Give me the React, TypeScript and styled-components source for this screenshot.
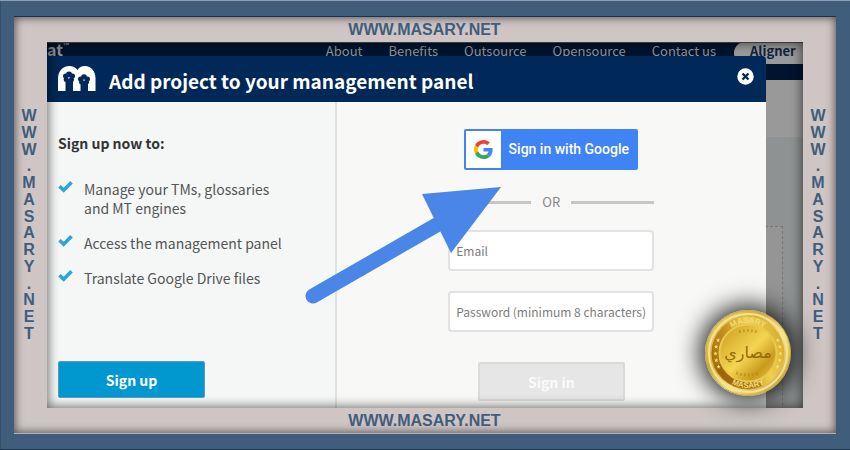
import React from "react";
import styled, { createGlobalStyle } from "styled-components";

const site = "WWW.MASARY.NET";
const blue = "#405d7b";
const navy = "#002858";
const sans = '"Noto Sans CJK SC", "Noto Sans", sans-serif';

const GlobalStyle = createGlobalStyle`
  * { box-sizing: border-box; }
  body { margin: 0; background: ${blue}; font-family: ${sans}; }
  button, input { font-family: inherit; }
`;

const Frame = styled.div`
  display: flex;
  min-height: 100vh;
  padding: 17px 14px;
  background: ${blue};
  box-shadow: inset 0 1px #8b9eb2, inset 0 -1px #1f3650, inset 1px 0 #34506c;
`;

const Mat = styled.div`
  flex: 1;
  display: grid;
  grid-template-columns: 33px 1fr 33px;
  grid-template-rows: 25px 1fr 25px;
  background: #cfc5c5;
  box-shadow: inset 0 0 9px 1px rgba(50, 40, 40, 0.75), 0 -1px #1c3147, 0 1px #aab6c2;
`;

const Banner = styled.div`
  grid-column: 1 / -1;
  display: flex;
  align-items: center;
  justify-content: center;
  padding-right: 1px;
  color: ${blue};
  font: bold 16px/18px "Liberation Sans", Arial, sans-serif;
`;

const SideBanner = styled.div`
  display: flex;
  flex-direction: column;
  justify-content: space-between;
  align-items: center;
  padding: 66px 3px 66px 0;
  color: ${blue};
  font: bold 16px/16px "Liberation Sans", Arial, sans-serif;
`;

const Screen = styled.div`
  position: relative;
  display: flex;
  flex-direction: column;
  overflow: hidden;
  background: #8f9292;
  &::after {
    content: "";
    position: absolute;
    inset: 0;
    pointer-events: none;
    box-shadow: inset 0 0 11px 1px rgba(0, 0, 0, 0.6), inset 0 1px #555;
  }
`;

const Backdrop = styled.div`
  position: absolute;
  inset: 0;
`;

const Nav = styled.nav`
  display: flex;
  justify-content: flex-end;
  height: 38px;
  background: #00142f;
`;

const Brand = styled.span`
  display: flex;
  margin-right: auto;
  color: #8d9196;
  font-size: 16px;
  font-weight: bold;
  line-height: 14px;
  sup { font-size: 8px; line-height: 8px; }
`;

const NavLink = styled.a`
  margin-right: 26px;
  color: #8f9297;
  font-size: 13px;
  line-height: 18px;
  text-decoration: none;
`;

const Aligner = styled.a`
  width: 69px;
  height: 22px;
  padding-left: 16px;
  margin-left: -8px;
  border-radius: 12px 0 0 12px;
  background: #999;
  color: #0d2340;
  font-size: 13px;
  font-weight: bold;
  line-height: 18px;
  text-decoration: none;
`;

const Hero = styled.div`
  height: 57px;
  background: #999;
`;

const DropZone = styled.div`
  height: 220px;
  margin: 89px 20px 0;
  border: 1px dashed #777;
  background: #959595;
`;

const Modal = styled.section`
  position: relative;
  flex: 1;
  display: flex;
  flex-direction: column;
  margin: 14px 37px 0 0;
`;

const Header = styled.header`
  display: flex;
  align-items: center;
  gap: 13px;
  min-height: 46px;
  padding: 0 12px 0 11px;
  border-radius: 0 4px 0 0;
  background: ${navy};
  color: #fff;
`;

const Title = styled.h1`
  flex: 1;
  margin: 0;
  font-size: 19px;
  line-height: 32px;
  padding-top: 4px;
  white-space: nowrap;
`;

const Close = styled.button`
  width: 17px;
  height: 17px;
  margin-bottom: 6px;
  padding: 0;
  border: 0;
  background: none;
  svg { display: block; }
`;

const Body = styled.div`
  position: relative;
  flex: 1;
  display: flex;
  background: #f8f8f7;
`;

const Benefits = styled.div`
  flex: 0 0 40%;
  display: flex;
  flex-direction: column;
  align-items: flex-start;
  padding: 31px 11px 10px;
  background: #f5f7f7;
`;

const Lead = styled.h2`
  margin: 0 0 27px;
  color: #333;
  font-size: 14px;
  line-height: 20px;
`;

const List = styled.ul`
  display: grid;
  gap: 16px;
  margin: 0;
  padding: 0;
  list-style: none;
`;

const Item = styled.li`
  display: flex;
  gap: 11px;
  color: #555;
  font-size: 14px;
  line-height: 19px;
  white-space: pre-line;
  svg { flex: none; }
`;

const SignUp = styled.button`
  width: 147px;
  height: 37px;
  margin-top: auto;
  padding: 0;
  border: 1px solid #5b9db8;
  border-radius: 2px;
  background: #0098cf;
  color: #fff;
  font-size: 14px;
  font-weight: bold;
`;

const Account = styled.div`
  flex: 1;
  display: flex;
  justify-content: center;
  padding: 27px 0 7px;
  border-left: 2px solid #e0e2e2;
`;

const Form = styled.form`
  display: flex;
  flex-direction: column;
  align-items: center;
  width: 206px;
`;

const Google = styled.button`
  display: flex;
  width: 174px;
  height: 41px;
  padding: 0;
  border: 2px solid #4083f5;
  border-radius: 2px;
  background: #4083f5;
  color: #fff;
  font: 500 14px/37px Roboto, sans-serif;
`;

const GoogleMark = styled.span`
  display: grid;
  place-items: center;
  width: 35px;
  height: 37px;
  background: #fff;
`;

const GoogleText = styled.span`
  flex: 1;
  white-space: nowrap;
`;

const Divider = styled.div`
  display: flex;
  align-items: center;
  gap: 11px;
  width: 100%;
  margin: 22px 0 18px;
  color: #888;
  font-size: 13px;
  line-height: 20px;
  &::before, &::after {
    content: "";
    flex: 1;
    height: 3px;
    background: #c6c6c6;
  }
`;

const Field = styled.input`
  width: 100%;
  height: 41px;
  margin-bottom: 20px;
  padding: 0 6px;
  border: 2px solid #e2e2e2;
  border-radius: 4px;
  background: #fff;
  color: #555;
  font-size: 12px;
  &::placeholder { color: #7c7c7c; opacity: 1; }
`;

const SignIn = styled.button`
  width: 147px;
  height: 39px;
  margin-top: 10px;
  padding: 0;
  border: 2px solid #dadada;
  border-radius: 2px;
  background: #e6e6e6;
  color: #fafafa;
  font-size: 14px;
  font-weight: bold;
`;

const Pointer = styled.svg`
  position: absolute;
  left: 257px;
  top: 85px;
`;

const CoinBadge = styled.div`
  position: absolute;
  right: 12px;
  bottom: 12px;
  z-index: 1;
  width: 86px;
  height: 86px;
  border-radius: 50%;
  box-shadow: 0 0 24px 5px rgba(0, 0, 0, 0.85);
  svg { display: block; }
`;

const MatCenter = styled.div`
  position: relative;
  display: grid;
`;

const Check = () => (
  <svg width="15" height="15" viewBox="0 0 15 15" aria-hidden="true">
    <path d="M1.5 6.3l4.2 4L13.5 2.3" fill="none" stroke="#2ba6dc" strokeWidth="3.6" />
  </svg>
);

const Logo = () => (
  <svg width="38" height="26" viewBox="0 0 38 26" aria-hidden="true">
    <path d="M0 25V13C0 5 5 0 11 0c4 0 6.500 1.500 8.500 4C21 1.500 23.500 0 27 0c6 0 10.500 5 10.500 12v13z" fill="#fff" />
    <g fill={navy}>
      <circle cx="11" cy="8.500" r="3" />
      <circle cx="7.500" cy="10" r="2.500" />
      <circle cx="14.500" cy="10" r="2.500" />
      <circle cx="8.200" cy="13.500" r="2.500" />
      <circle cx="13.500" cy="13.500" r="2.500" />
      <path d="M7.500 13h7.500v13H7.500z" />
      <circle cx="26" cy="11" r="2.800" />
      <circle cx="22.500" cy="13" r="2.500" />
      <circle cx="29.500" cy="13" r="2.500" />
      <circle cx="23.500" cy="16" r="2.500" />
      <circle cx="28.500" cy="16" r="2.500" />
      <path d="M22.500 15h7.500v11h-7.500z" />
    </g>
  </svg>
);

const GoogleG = () => (
  <svg width="19" height="19" viewBox="0 0 48 48" aria-hidden="true">
    <path fill="#EA4335" d="M24 9.5c3.54 0 6.71 1.22 9.21 3.6l6.85-6.85C35.9 2.38 30.47 0 24 0 14.62 0 6.51 5.38 2.56 13.22l7.98 6.19C12.43 13.72 17.74 9.5 24 9.5z" />
    <path fill="#4285F4" d="M46.98 24.55c0-1.57-.15-3.09-.38-4.55H24v9.02h12.94c-.58 2.96-2.26 5.48-4.78 7.18l7.73 6c4.51-4.18 7.09-10.36 7.09-17.65z" />
    <path fill="#FBBC05" d="M10.53 28.59A14.5 14.5 0 0 1 10.53 19.41l-7.98-6.19a24 24 0 0 0 0 21.56l7.98-6.19z" />
    <path fill="#34A853" d="M24 48c6.48 0 11.93-2.13 15.89-5.81l-7.73-6c-2.15 1.45-4.92 2.3-8.16 2.3-6.26 0-11.57-4.22-13.47-9.91l-7.98 6.19C6.51 42.62 14.62 48 24 48z" />
  </svg>
);

const stars = [155, 167, 179, 191, 203, 337, 349, 1, 13, 25];

const Coin = () => (
  <CoinBadge>
    <svg width="86" height="86" viewBox="0 0 86 86" role="img" aria-label="Masary coin">
      <defs>
        <linearGradient id="rim" x1="0" y1="0" x2="1" y2="1">
          <stop offset="0" stopColor="#f3df78" />
          <stop offset=".35" stopColor="#d4ad37" />
          <stop offset=".6" stopColor="#f6e78b" />
          <stop offset="1" stopColor="#b98b22" />
        </linearGradient>
        <linearGradient id="ring" x1="0" y1=".7" x2="1" y2=".3">
          <stop offset="0" stopColor="#a26a0c" />
          <stop offset=".35" stopColor="#c79420" />
          <stop offset=".65" stopColor="#f0cf50" />
          <stop offset="1" stopColor="#d6aa2c" />
        </linearGradient>
        <linearGradient id="face" x1="0" y1="0" x2="1" y2="1">
          <stop offset="0" stopColor="#c99a1d" />
          <stop offset=".5" stopColor="#f4d552" />
          <stop offset=".75" stopColor="#c99b1c" />
          <stop offset="1" stopColor="#ecd05a" />
        </linearGradient>
        <path id="upper" d="M13 43a30 30 0 0 1 60 0" />
        <path id="lower" d="M8 43a35 35 0 0 0 70 0" />
      </defs>
      <circle cx="43" cy="43" r="42.5" fill="url(#rim)" stroke="#c5a33d" />
      <circle cx="43" cy="43" r="39" fill="none" stroke="#f4e492" strokeWidth="2" />
      <circle cx="43" cy="43" r="36.5" fill="url(#ring)" />
      <path d="M10 56a36 36 0 0 0 47 20l-3-7a28 28 0 0 1-36-16z" fill="#8f5508" opacity=".55" />
      <circle cx="43" cy="43" r="28.5" fill="url(#face)" stroke="#e9c94e" strokeWidth="2" />
      <g fill="#f5dc74" fontFamily="Liberation Sans" fontSize="8" fontWeight="bold" textAnchor="middle">
        <text><textPath href="#upper" startOffset="50%">MASARY</textPath></text>
        <text><textPath href="#lower" startOffset="50%">MASARY</textPath></text>
      </g>
      {stars.map((a) => (
        <path
          key={a}
          d="M0-2.2l.6 1.5h1.6L.9.3l.5 1.6L0 1l-1.4.9.5-1.6-1.3-1h1.6z"
          fill="#f7df78"
          transform={`translate(${43 + 32.5 * Math.cos((a * Math.PI) / 180)} ${43 + 32.5 * Math.sin((a * Math.PI) / 180)})`}
        />
      ))}
      <path d="M34 22q9-3 18 0M31 63q12 4 24 0" fill="none" stroke="#b5861b" strokeWidth="3" strokeDasharray="2 2" opacity=".6" />
      <text x="43" y="48" textAnchor="middle" fontFamily="DejaVu Sans" fontSize="16" fill="#98690a" direction="rtl">مصاري</text>
    </svg>
  </CoinBadge>
);

const letters = site.split("");
const links = ["About", "Benefits", "Outsource", "Opensource", "Contact us"];
const benefits = [
  "Manage your TMs, glossaries\nand MT engines",
  "Access the management panel",
  "Translate Google Drive files",
];

export default function App() {
  return (
    <>
      <GlobalStyle />
      <Frame>
        <Mat>
          <Banner>{site}</Banner>
          <SideBanner>{letters.map((c, i) => <span key={i}>{c}</span>)}</SideBanner>
          <MatCenter>
            <Screen>
              <Backdrop>
                <Nav>
                  <Brand>at<sup>™</sup></Brand>
                  {links.map((l) => <NavLink key={l} href="#">{l}</NavLink>)}
                  <Aligner href="#">Aligner</Aligner>
                </Nav>
                <Hero />
                <DropZone />
              </Backdrop>
              <Modal role="dialog" aria-labelledby="title">
                <Header>
                  <Logo />
                  <Title id="title">Add project to your management panel</Title>
                  <Close aria-label="Close">
                    <svg width="17" height="17" viewBox="0 0 17 17">
                      <circle cx="8.5" cy="8.5" r="8.2" fill="#fff" />
                      <path d="M5.5 5.5l6 6m0-6l-6 6" stroke={navy} strokeWidth="2.4" />
                    </svg>
                  </Close>
                </Header>
                <Body>
                  <Benefits>
                    <Lead>Sign up now to:</Lead>
                    <List>
                      {benefits.map((b) => <Item key={b}><Check /><span>{b}</span></Item>)}
                    </List>
                    <SignUp>Sign up</SignUp>
                  </Benefits>
                  <Account>
                    <Form onSubmit={(e) => e.preventDefault()}>
                      <Google type="button">
                        <GoogleMark><GoogleG /></GoogleMark>
                        <GoogleText>Sign in with Google</GoogleText>
                      </Google>
                      <Divider>OR</Divider>
                      <Field type="email" aria-label="Email" placeholder="Email" />
                      <Field type="password" aria-label="Password" placeholder="Password (minimum 8 characters)" />
                      <SignIn disabled>Sign in</SignIn>
                    </Form>
                  </Account>
                  <Pointer width="200" height="120" viewBox="0 0 200 120" aria-hidden="true">
                    <path d="M9 109L136 36" stroke="#4a86e8" strokeWidth="15" strokeLinecap="round" />
                    <path d="M118 7l79-7-50 66z" fill="#4a86e8" />
                  </Pointer>
                </Body>
              </Modal>
            </Screen>
            <Coin />
          </MatCenter>
          <SideBanner>{letters.map((c, i) => <span key={i}>{c}</span>)}</SideBanner>
          <Banner>{site}</Banner>
        </Mat>
      </Frame>
    </>
  );
}
